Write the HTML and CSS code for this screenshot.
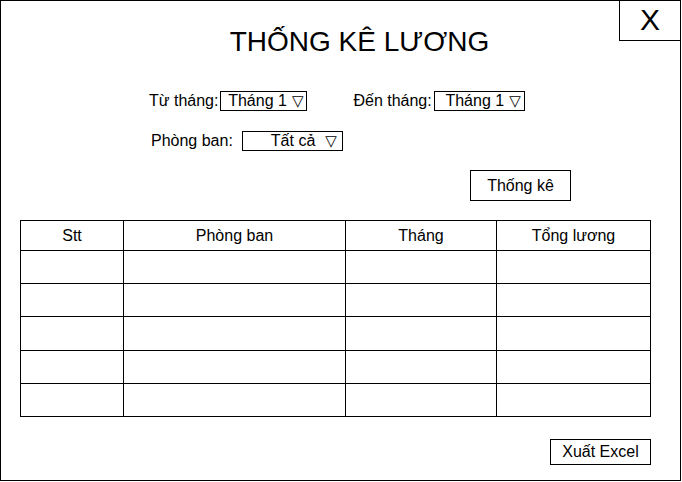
FILE: index.html
```html
<!DOCTYPE html>
<html>
<head>
  <meta charset="UTF-8">
  <title>Thống kê lương</title>
  <link rel="stylesheet" href="styles.css">
</head>
<body>
  <div class="window">
    <div class="close-btn">X</div>
    <h1 class="title">THỐNG KÊ LƯƠNG</h1>

    <div class="filter-row first">
      <span class="label">Từ tháng:</span>
      <div class="dropdown month"><span>Tháng 1</span><span class="arrow">▽</span></div>
      <span class="label to">Đến tháng:</span>
      <div class="dropdown month"><span>Tháng 1</span><span class="arrow">▽</span></div>
    </div>

    <div class="filter-row second">
      <span class="label">Phòng ban:</span>
      <div class="dropdown dept"><span>Tất cả</span><span class="arrow">▽</span></div>
    </div>

    <div class="action-row">
      <button class="btn stat-btn">Thống kê</button>
    </div>

    <table class="salary-table">
      <colgroup>
        <col class="c-stt">
        <col class="c-dept">
        <col class="c-month">
        <col class="c-total">
      </colgroup>
      <thead>
        <tr><th>Stt</th><th>Phòng ban</th><th>Tháng</th><th>Tổng lương</th></tr>
      </thead>
      <tbody>
        <tr><td></td><td></td><td></td><td></td></tr>
        <tr><td></td><td></td><td></td><td></td></tr>
        <tr class="tall"><td></td><td></td><td></td><td></td></tr>
        <tr><td></td><td></td><td></td><td></td></tr>
        <tr><td></td><td></td><td></td><td></td></tr>
      </tbody>
    </table>

    <div class="footer-row">
      <button class="btn export-btn">Xuất Excel</button>
    </div>
  </div>
</body>
</html>
```

FILE: styles.css
```css
* {
  box-sizing: border-box;
}
body {
  margin: 0;
  background: #fff;
  font-family: "Liberation Sans", Arial, sans-serif;
  color: #000;
}
.window {
  position: relative;
  width: 681px;
  height: 481px;
  border: 1px solid #000;
  display: flex;
  flex-direction: column;
}
.close-btn {
  position: absolute;
  top: -1px;
  right: -1px;
  width: 62px;
  height: 41px;
  border: 1px solid #000;
  background: #fff;
  font-size: 30px;
  line-height: 38px;
  text-align: center;
}
.title {
  margin: 25px 0 0;
  padding-left: 38px;
  font-size: 28px;
  font-weight: normal;
  line-height: 32px;
  text-align: center;
}
.filter-row {
  display: flex;
  align-items: center;
  font-size: 16px;
}
.filter-row.first {
  margin-top: 33px;
  padding-left: 148px;
}
.filter-row.second {
  margin-top: 20px;
  padding-left: 150px;
}
.label.to {
  margin-left: 46px;
}
.dropdown {
  height: 20px;
  border: 1px solid #000;
  display: flex;
  align-items: center;
  justify-content: flex-end;
  line-height: 18px;
}
.dropdown.month {
  width: 87px;
  margin-left: 2px;
  padding-right: 3px;
  gap: 5px;
}
.dropdown.month:last-child {
  width: 91px;
}
.dropdown.dept {
  width: 101px;
  margin-left: 9px;
  padding-right: 5px;
  gap: 10px;
}
.arrow {
  font-family: "DejaVu Sans", sans-serif;
  font-size: 15px;
}
.btn {
  font-family: "Liberation Sans", Arial, sans-serif;
  font-size: 16px;
  color: #000;
  background: #fff;
  border: 1px solid #000;
  padding: 0;
}
.action-row {
  margin-top: 19px;
  padding-left: 469px;
}
.stat-btn {
  width: 101px;
  height: 31px;
}
.salary-table {
  margin: 19px 0 0 19px;
  width: 630px;
  border-collapse: collapse;
  table-layout: fixed;
  font-size: 16px;
}
.salary-table th,
.salary-table td {
  border: 1px solid #000;
  padding: 0;
  font-weight: normal;
  text-align: center;
}
.salary-table th {
  height: 30px;
}
.salary-table td {
  height: 33px;
}
.salary-table tr.tall td {
  height: 34px;
}
.c-stt { width: 103px; }
.c-dept { width: 222px; }
.c-month { width: 151px; }
.c-total { width: 154px; }
.footer-row {
  margin-top: 22px;
  padding-left: 549px;
}
.export-btn {
  width: 101px;
  height: 26px;
}
```
